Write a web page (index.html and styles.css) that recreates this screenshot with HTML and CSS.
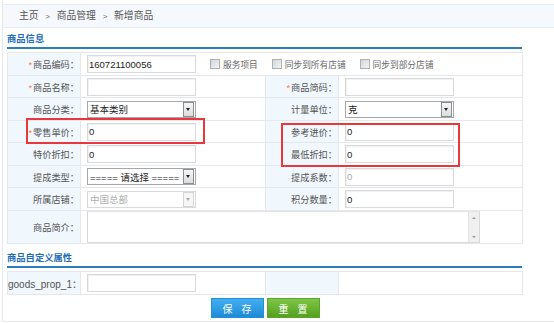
FILE: index.html
```html
<!DOCTYPE html>
<html lang="zh-CN">
<head>
    <meta charset="UTF-8">
    <title>新增商品</title>
    <link rel="stylesheet" href="styles.css">
</head>
<body>
    <div class="page">
        <div class="crumb">主页 <span class="sep">&gt;</span> 商品管理 <span class="sep">&gt;</span> 新增商品</div>

        <div class="sec-head">商品信息</div>
        <table class="form-table">
            <colgroup>
                <col class="c-label"><col class="c-field"><col class="c-label"><col class="c-field2">
            </colgroup>
            <tr class="r-odd">
                <th><em>*</em>商品编码：</th>
                <td colspan="3">
                    <div class="line">
                        <input class="ipt" type="text" value="160721100056">
                        <label class="chk chk-first"><i></i>服务项目</label>
                        <label class="chk"><i></i>同步到所有店铺</label>
                        <label class="chk"><i></i>同步到部分店铺</label>
                    </div>
                </td>
            </tr>
            <tr class="r-even">
                <th><em>*</em>商品名称：</th>
                <td><input class="ipt" type="text" value=""></td>
                <th><em>*</em>商品简码：</th>
                <td><input class="ipt" type="text" value=""></td>
            </tr>
            <tr class="r-odd">
                <th>商品分类：</th>
                <td><div class="sel"><span>基本类别</span><b class="arrow"></b></div></td>
                <th>计量单位：</th>
                <td><div class="sel"><span>克</span><b class="arrow"></b></div></td>
            </tr>
            <tr class="r-even">
                <th><em>*</em>零售单价：</th>
                <td><input class="ipt" type="text" value="0"></td>
                <th>参考进价：</th>
                <td><input class="ipt" type="text" value="0"></td>
            </tr>
            <tr class="r-odd">
                <th>特价折扣：</th>
                <td><input class="ipt" type="text" value="0"></td>
                <th>最低折扣：</th>
                <td><input class="ipt" type="text" value="0"></td>
            </tr>
            <tr class="r-even">
                <th>提成类型：</th>
                <td><div class="sel"><span>===== 请选择 =====</span><b class="arrow"></b></div></td>
                <th>提成系数：</th>
                <td><input class="ipt ipt-off" type="text" value="0" disabled></td>
            </tr>
            <tr class="r-odd">
                <th>所属店铺：</th>
                <td><div class="sel sel-off"><span>中国总部</span><b class="arrow"></b></div></td>
                <th>积分数量：</th>
                <td><input class="ipt" type="text" value="0"></td>
            </tr>
            <tr class="r-memo">
                <th>商品简介：</th>
                <td colspan="3">
                    <div class="memo">
                        <div class="memo-text"></div>
                        <div class="sb"><span class="sb-up"></span><span class="sb-down"></span></div>
                    </div>
                </td>
            </tr>
        </table>

        <div class="sec-head sec-head-2">商品自定义属性</div>
        <table class="form-table">
            <colgroup>
                <col class="c-label"><col class="c-field"><col class="c-label"><col class="c-field2">
            </colgroup>
            <tr class="r-odd">
                <th class="latin">goods_prop_1：</th>
                <td><input class="ipt" type="text" value=""></td>
                <th></th>
                <td></td>
            </tr>
        </table>

        <div class="btn-row">
            <button class="btn btn-save" type="button">保存</button>
            <button class="btn btn-reset" type="button">重置</button>
        </div>

        <!-- red marks drawn over the form -->
        <div class="mark mark-1"></div>
        <div class="mark mark-2"></div>
    </div>
</body>
</html>
```

FILE: styles.css
```css
body {
    margin: 0;
    font-family: "Liberation Sans", "Noto Sans CJK SC", sans-serif;
    font-size: 10px;
    color: #555;
    background: #fff;
}

/* outer frame */
.page {
    position: relative;
    margin-left: 2px;
    padding-top: 4px;
    height: 317px;
    border-left: 1px solid #e6e9ec;
    border-bottom: 1px solid #e6e9ec;
}

/* breadcrumb */
.crumb {
    height: 22px;
    line-height: 22px;
    padding-left: 16px;
    background: #f5f9fd;
    border-top: 1px solid #e7edf3;
    border-bottom: 1px solid #e7edf3;
    font-size: 9.8px;
    color: #555;
}
.crumb .sep {
    font-size: 8px;
    margin: 0 4px;
    color: #666;
}

/* section heads */
.sec-head {
    width: 515px;
    margin: 0 0 3px 4px;
    padding-top: 4px;
    height: 15px;
    line-height: 14px;
    border-bottom: 2px solid #2a7dbf;
    color: #1e6cb3;
    font-weight: bold;
    font-size: 9.3px;
}
.sec-head-2 {
    padding-top: 7px;
    height: 15px;
}

/* form table */
.form-table {
    width: 516px;
    margin-left: 4px;
    border-collapse: collapse;
    table-layout: fixed;
}
.c-label { width: 73px; }
.c-field { width: 185px; }
.c-field2 { width: 184px; }

.form-table th,
.form-table td {
    border: 1px solid #e5e7ea;
    padding: 0;
}
.form-table th {
    background: #f0f7fd;
    text-align: right;
    padding-right: 1px;
    font-weight: normal;
    font-size: 9.2px;
    color: #555;
    white-space: nowrap;
}
.form-table th.latin {
    font-size: 10px;
    color: #555;
}
.form-table th em {
    font-style: normal;
    color: #f47a3a;
    margin-right: 1px;
}
.form-table td {
    padding-left: 6px;
    background: #fff;
}
.r-odd th, .r-odd td { height: 22px; }
.r-even th, .r-even td { height: 21px; }
.r-memo th, .r-memo td { height: 32px; }

.line {
    display: flex;
    align-items: center;
}

/* inputs */
.ipt {
    display: block;
    width: 109px;
    height: 18px;
    box-sizing: border-box;
    margin: 0;
    padding: 0 1px;
    border: 1px solid #d7d9dc;
    box-shadow: inset 1px 1px 1px #f0f0f0;
    background: #fff;
    font-family: "Liberation Sans", sans-serif;
    font-size: 9.5px;
    color: #222;
    outline: none;
}
.ipt-off {
    color: #aaa;
}

/* checkboxes */
.chk {
    display: flex;
    align-items: center;
    margin-left: 14px;
    font-size: 8.7px;
    color: #666;
}
.chk i {
    width: 8px;
    height: 8px;
    margin-right: 3px;
    border: 1px solid #aeb1b4;
    background: linear-gradient(135deg, #d4d6d8, #f4f4f4);
}

/* selects */
.sel {
    display: flex;
    align-items: center;
    justify-content: space-between;
    width: 109px;
    height: 17px;
    box-sizing: border-box;
    border: 1px solid #a5a8ab;
    padding: 0 1px 0 2px;
    background: #fff;
    font-size: 9.5px;
    color: #222;
}
.sel .arrow {
    position: relative;
    width: 9px;
    height: 13px;
    border: 1px solid #8c8f92;
    background: linear-gradient(#f6f6f6, #dcdcdc);
}
.sel .arrow::after {
    content: "";
    position: absolute;
    left: 2px;
    top: 5px;
    border-left: 2.5px solid transparent;
    border-right: 2.5px solid transparent;
    border-top: 3px solid #222;
}
.sel-off {
    border-color: #d8dadc;
    color: #b0b0b0;
}
.sel-off .arrow {
    border-color: #d3d5d7;
    background: #f6f6f6;
}
.sel-off .arrow::after {
    border-top-color: #aaa;
}

/* textarea */
.memo {
    display: flex;
    width: 393px;
    height: 32px;
    box-sizing: border-box;
    border: 1px solid #d7d9dc;
    border-top-color: #e3e3e3;
}
.memo-text { flex: 1; }
.sb {
    width: 10px;
    display: flex;
    flex-direction: column;
    justify-content: space-between;
    align-items: center;
    padding: 5px 0 4px;
    background: #f0f0f0;
    border-left: 1px solid #e4e4e4;
}
.sb-up {
    border-left: 2px solid transparent;
    border-right: 2px solid transparent;
    border-bottom: 2px solid #999;
}
.sb-down {
    border-left: 2px solid transparent;
    border-right: 2px solid transparent;
    border-top: 2px solid #999;
}

/* buttons */
.btn-row {
    width: 516px;
    margin: 3px 0 0 4px;
    display: flex;
    justify-content: center;
    gap: 3px;
}
.btn {
    width: 53px;
    height: 20px;
    padding: 0 0 0 9px;
    border: 1px solid;
    font-family: "Noto Sans CJK SC", sans-serif;
    font-size: 10px;
    letter-spacing: 9px;
    color: #fff;
    cursor: pointer;
}
.btn-save {
    background: linear-gradient(#45aef0, #1c8bd6);
    border-color: #2290d8;
}
.btn-reset {
    background: linear-gradient(#7fc545, #54a020);
    border-color: #5aa62a;
}

/* red marks */
.mark {
    position: absolute;
    box-sizing: border-box;
    border: 2px solid #e8383d;
}
.mark-1 {
    left: 23px;
    top: 118px;
    width: 179px;
    height: 26px;
}
.mark-2 {
    left: 278px;
    top: 123px;
    width: 179px;
    height: 44px;
}
```
